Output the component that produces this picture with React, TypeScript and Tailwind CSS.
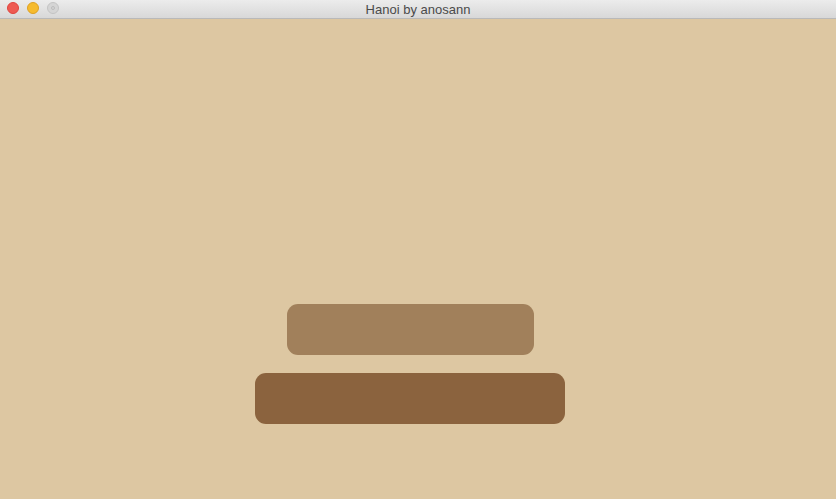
import React from "react";

const Disk = ({ width, color }: { width: string; color: string }) => (
  <div className={`h-[51px] rounded-[11px] ${width} ${color}`} />
);

export default function App() {
  return (
    <div className="flex h-[499px] w-[836px] flex-col bg-[#ddc7a2] font-['Helvetica_Neue','Liberation_Sans',sans-serif]">
      <div className="relative flex h-[19px] shrink-0 items-center justify-center border-b border-[#b9b9b9] bg-gradient-to-b from-[#ececec] to-[#d8d8d8]">
        <div className="absolute left-[7px] top-[2px] flex gap-[8px]">
          <span className="h-[12px] w-[12px] rounded-full border border-[#e0443e] bg-[#ee5a52]" />
          <span className="h-[12px] w-[12px] rounded-full border border-[#dea123] bg-[#f6bb2e]" />
          <span className="flex h-[12px] w-[12px] items-center justify-center rounded-full border border-[#c4c4c4] bg-[#d5d5d5]">
            <span className="h-[4px] w-[4px] rounded-full border border-[#bdbdbd]" />
          </span>
        </div>
        <span className="text-[13px] leading-none text-[#4a4a4a]">Hanoi by anosann</span>
      </div>
      <div className="flex flex-1 flex-col items-center justify-end gap-[18px] pb-[75px] pr-[16px]">
        <Disk width="w-[247px]" color="bg-[#a1805b]" />
        <Disk width="w-[310px]" color="bg-[#8b633e]" />
      </div>
    </div>
  );
}
